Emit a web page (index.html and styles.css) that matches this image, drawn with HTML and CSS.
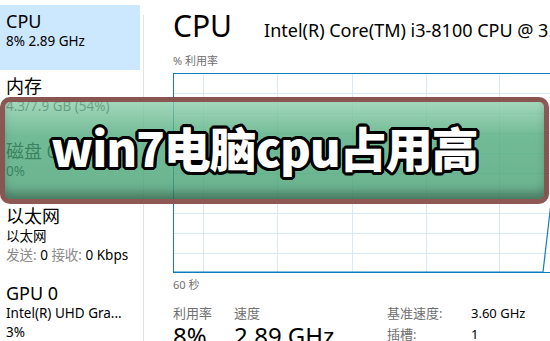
FILE: index.html
```html
<!DOCTYPE html>
<html lang="zh-CN">
<head>
    <meta charset="UTF-8">
    <meta name="viewport" content="width=device-width, initial-scale=1.0">
    <title>win7电脑cpu占用高</title>
    <link rel="stylesheet" href="styles.css">
</head>
<body>
    <div id="taskmgr">
        <aside class="side">
            <div class="item active">
                <div class="name">CPU</div>
                <div class="sub">8% 2.89 GHz</div>
            </div>
            <div class="item">
                <div class="name">内存</div>
                <div class="sub">4.3/7.9 GB (54%)</div>
            </div>
            <div class="item">
                <div class="name">磁盘 0 (C:)</div>
                <div class="sub">0%</div>
            </div>
            <div class="item">
                <div class="name">以太网</div>
                <div class="sub">以太网</div>
                <div class="sub"><span class="muted">发送:</span> 0 <span class="muted">接收:</span> 0 Kbps</div>
            </div>
            <div class="item">
                <div class="name">GPU 0</div>
                <div class="sub">Intel(R) UHD Gra...</div>
                <div class="sub">3%</div>
            </div>
        </aside>
        <div class="sep"></div>

        <main class="main">
            <div class="title-row">
                <h1>CPU</h1>
                <span class="model">Intel(R) Core(TM) i3-8100 CPU @ 3.60GHz</span>
            </div>
            <div class="caption">% 利用率</div>
            <svg class="graph" width="380" height="200" viewBox="0 0 380 200">
                <g stroke="#d9eaf4" stroke-width="1">
                    <line x1="30.5" y1="0" x2="30.5" y2="200"/>
                    <line x1="104.5" y1="0" x2="104.5" y2="200"/>
                    <line x1="179.5" y1="0" x2="179.5" y2="200"/>
                    <line x1="253.5" y1="0" x2="253.5" y2="200"/>
                    <line x1="326.5" y1="0" x2="326.5" y2="200"/>
                    <line x1="0" y1="20.5" x2="380" y2="20.5"/>
                    <line x1="0" y1="40.5" x2="380" y2="40.5"/>
                    <line x1="0" y1="60.5" x2="380" y2="60.5"/>
                    <line x1="0" y1="80.5" x2="380" y2="80.5"/>
                    <line x1="0" y1="100.5" x2="380" y2="100.5"/>
                    <line x1="0" y1="120.5" x2="380" y2="120.5"/>
                    <line x1="0" y1="140.5" x2="380" y2="140.5"/>
                    <line x1="0" y1="160.5" x2="380" y2="160.5"/>
                    <line x1="0" y1="180.5" x2="380" y2="180.5"/>
                </g>
                <rect x="0.5" y="0.5" width="379" height="199" fill="none" stroke="#117dbb"/>
                <polyline points="0,199 370,199 378,130 380,130" fill="none" stroke="#117dbb" stroke-width="1.2"/>
            </svg>
            <div class="caption secs">60 秒</div>

            <div class="stats">
                <div class="stat util">
                    <div class="label">利用率</div>
                    <div class="value">8%</div>
                </div>
                <div class="stat speed">
                    <div class="label">速度</div>
                    <div class="value">2.89 GHz</div>
                </div>
                <div class="specs">
                    <span class="label">基准速度:</span><span>3.60 GHz</span>
                    <span class="label">插槽:</span><span>1</span>
                </div>
            </div>
        </main>
    </div>

    <div class="banner">
        <span>win7电脑cpu占用高</span>
    </div>
</body>
</html>
```

FILE: styles.css
```css
html, body {
    margin: 0;
    padding: 0;
}

body {
    width: 550px;
    height: 341px;
    overflow: hidden;
    position: relative;
    background: #fff;
    color: #000;
    font-family: "Noto Sans", "Noto Sans CJK SC", sans-serif;
}

#taskmgr {
    display: flex;
    height: 341px;
}

/* left list */
.side {
    width: 140px;
    flex-shrink: 0;
    padding-top: 5px;
}

.item {
    min-height: 65px;
    box-sizing: border-box;
    padding: 5px 6px 12px;
    white-space: nowrap;
}

.item.active {
    background: #cce8ff;
}

.item .name {
    font-size: 18px;
    line-height: 22px;
}

.item .sub {
    font-size: 13.5px;
    line-height: 19px;
}

.muted {
    color: #8a8a8a;
}

.sep {
    width: 1px;
    margin: 15px 0 0 3px;
    background: #e3e3e3;
}

/* main panel */
.main {
    flex: 1;
    min-width: 0;
    padding: 8px 0 0 29px;
    overflow: hidden;
}

.title-row {
    display: flex;
    align-items: baseline;
    white-space: nowrap;
}

.title-row h1 {
    margin: 0;
    font-size: 30px;
    font-weight: 400;
    line-height: 36px;
}

.model {
    margin-left: 32px;
    font-size: 18px;
}

.caption {
    font-size: 11px;
    line-height: 14px;
    color: #707070;
    margin-top: 10px;
    margin-bottom: 5px;
}

.graph {
    display: block;
}

.caption.secs {
    margin-top: 5px;
    margin-bottom: 0;
}

.stats {
    display: flex;
    margin-top: 13px;
    white-space: nowrap;
}

.stat .label,
.specs .label {
    color: #707070;
}

.stat .label {
    font-size: 13px;
    line-height: 17px;
}

.stat .value {
    font-size: 24px;
    line-height: 28px;
}

.util {
    width: 61px;
}

.speed {
    width: 153px;
}

.specs {
    display: grid;
    grid-template-columns: 84px auto;
    row-gap: 4px;
    font-size: 13px;
    line-height: 17px;
    align-content: start;
}

/* title overlay */
.banner {
    position: absolute;
    left: 0;
    top: 97px;
    width: 549px;
    height: 107px;
    box-sizing: border-box;
    border: 5px solid rgba(140, 72, 72, 0.88);
    border-radius: 10px;
    background: linear-gradient(rgba(140, 205, 170, 0.8), rgba(75, 168, 122, 0.78) 35%, rgba(70, 160, 115, 0.8));
    box-shadow: inset 0 -10px 12px -4px rgba(0, 0, 0, 0.35);
    display: flex;
    align-items: center;
    padding: 0 0 8px 46px;
}

.banner span {
    font-family: "Noto Sans CJK SC", sans-serif;
    font-weight: 900;
    font-size: 47px;
    line-height: 1;
    letter-spacing: -1px;
    color: #fff;
    text-shadow:
        3px 0 #000, -3px 0 #000, 0 3px #000, 0 -3px #000,
        2px 2px #000, -2px 2px #000, 2px -2px #000, -2px -2px #000,
        3px 1px #000, 3px -1px #000, -3px 1px #000, -3px -1px #000,
        1px 3px #000, -1px 3px #000, 1px -3px #000, -1px -3px #000;
}
```
